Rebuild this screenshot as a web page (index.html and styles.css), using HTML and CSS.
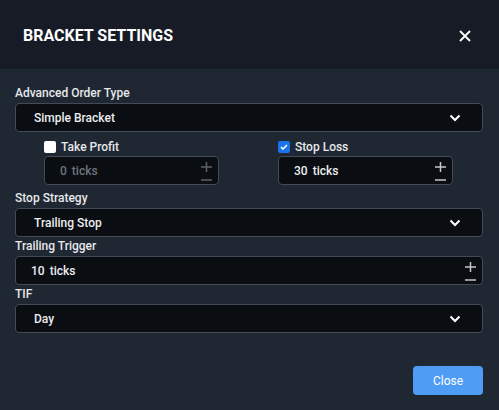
FILE: index.html
```html
<!DOCTYPE html>
<html>
<head>
<meta charset="utf-8">
<link rel="stylesheet" href="styles.css">
</head>
<body>
<div class="dialog">
  <div class="header">
    <div class="title">BRACKET SETTINGS</div>
    <svg class="close-x" width="12" height="12" viewBox="0 0 12 12"><path d="M1 1 L11 11 M11 1 L1 11" stroke="#ffffff" stroke-width="1.8" fill="none"/></svg>
  </div>
  <div class="body">
    <div class="group">
      <div class="label">Advanced Order Type</div>
      <div class="field select"><span class="value">Simple Bracket</span>
        <svg class="chev" width="12" height="8" viewBox="0 0 12 8"><path d="M1.5 1.5 L6 6 L10.5 1.5" stroke="#ffffff" stroke-width="2" fill="none"/></svg>
      </div>
    </div>
    <div class="pair">
      <div class="col">
        <div class="check-row"><span class="box"></span><span class="check-label">Take Profit</span></div>
        <div class="field num disabled"><span class="value">0</span><span class="unit">ticks</span>
          <div class="stepper"><svg width="11" height="10" viewBox="0 0 11 10"><path d="M0 5 H11 M5.5 0 V10" stroke="#5d636c" stroke-width="1.5"/></svg><svg width="11" height="2" viewBox="0 0 11 2"><path d="M0 1 H11" stroke="#5d636c" stroke-width="1.5"/></svg></div>
        </div>
      </div>
      <div class="col">
        <div class="check-row"><span class="box checked"><svg width="8" height="6" viewBox="0 0 8 6"><path d="M1 3 L3 5 L7 1" stroke="#ffffff" stroke-width="1.5" fill="none"/></svg></span><span class="check-label">Stop Loss</span></div>
        <div class="field num"><span class="value">30</span><span class="unit">ticks</span>
          <div class="stepper"><svg width="11" height="10" viewBox="0 0 11 10"><path d="M0 5 H11 M5.5 0 V10" stroke="#c3c7cd" stroke-width="1.5"/></svg><svg width="11" height="2" viewBox="0 0 11 2"><path d="M0 1 H11" stroke="#c3c7cd" stroke-width="1.5"/></svg></div>
        </div>
      </div>
    </div>
    <div class="group">
      <div class="label">Stop Strategy</div>
      <div class="field select"><span class="value">Trailing Stop</span>
        <svg class="chev" width="12" height="8" viewBox="0 0 12 8"><path d="M1.5 1.5 L6 6 L10.5 1.5" stroke="#ffffff" stroke-width="2" fill="none"/></svg>
      </div>
    </div>
    <div class="group">
      <div class="label">Trailing Trigger</div>
      <div class="field num wide"><span class="value">10</span><span class="unit">ticks</span>
        <div class="stepper"><svg width="11" height="10" viewBox="0 0 11 10"><path d="M0 5 H11 M5.5 0 V10" stroke="#c3c7cd" stroke-width="1.5"/></svg><svg width="11" height="2" viewBox="0 0 11 2"><path d="M0 1 H11" stroke="#c3c7cd" stroke-width="1.5"/></svg></div>
      </div>
    </div>
    <div class="group">
      <div class="label">TIF</div>
      <div class="field select"><span class="value">Day</span>
        <svg class="chev" width="12" height="8" viewBox="0 0 12 8"><path d="M1.5 1.5 L6 6 L10.5 1.5" stroke="#ffffff" stroke-width="2" fill="none"/></svg>
      </div>
    </div>
    <div class="footer">
      <button class="btn">Close</button>
    </div>
  </div>
</div>
</body>
</html>
```

FILE: styles.css
```css
* { box-sizing: border-box; }
html, body { margin: 0; padding: 0; background: #1f2733; }
body { font-family: Roboto, "Liberation Sans", sans-serif; }
.dialog {
  width: 499px;
  height: 410px;
  background: #1f2733;
  display: flex;
  flex-direction: column;
}
.header {
  height: 69px;
  flex: none;
  background: #161b25;
  display: flex;
  align-items: center;
  justify-content: space-between;
  padding: 0 28px 0 23px;
}
.title {
  color: #ffffff;
  font-weight: 700;
  font-size: 16px;
  line-height: 20px;
  padding-top: 2px;
}
.close-x { display: block; margin-top: 2px; }
.body {
  padding: 16px 16px 0 15px;
  display: flex;
  flex-direction: column;
}
.group { margin-bottom: 1px; }
.label {
  color: #e6e8eb;
  font-size: 12px;
  font-weight: 500;
  line-height: 16px;
  margin-bottom: 2px;
}
.field {
  height: 29px;
  background: #0a0d12;
  border: 1px solid #434b59;
  border-radius: 4px;
  display: flex;
  align-items: center;
  color: #eceef0;
  font-size: 12px;
  font-weight: 500;
  position: relative;
}
.select { padding: 0 21px 0 18px; justify-content: space-between; }
.chev { display: block; }
.num { padding: 0 6px 0 15px; }
.num .unit { margin-left: 5px; flex: 1; }
.num.disabled { color: #6f757e; }
.stepper {
  display: flex;
  flex-direction: column;
  align-items: center;
  gap: 7px;
  padding-top: 1px;
}
.stepper svg { display: block; }
.pair {
  display: grid;
  grid-template-columns: 1fr 1fr;
  margin-top: 6px;
  margin-bottom: 5px;
}
.col { padding-left: 29px; }
.col .field { width: 175px; }
.check-row {
  height: 16px;
  display: flex;
  align-items: center;
  margin-bottom: 1px;
}
.box {
  width: 12px;
  height: 12px;
  border-radius: 2px;
  background: #ffffff;
  display: flex;
  align-items: center;
  justify-content: center;
  flex: none;
}
.box.checked { background: #1a73e8; }
.box svg { display: block; }
.check-label {
  color: #e6e8eb;
  font-size: 12px;
  font-weight: 500;
  margin-left: 5px;
}
.footer {
  display: flex;
  justify-content: flex-end;
  margin-top: 32px;
}
.btn {
  width: 70px;
  height: 29px;
  border: none;
  border-radius: 4px;
  background: #4f9cf5;
  color: #ffffff;
  font-family: Roboto, "Liberation Sans", sans-serif;
  font-size: 12px;
  font-weight: 400;
  padding: 0;
}
```
